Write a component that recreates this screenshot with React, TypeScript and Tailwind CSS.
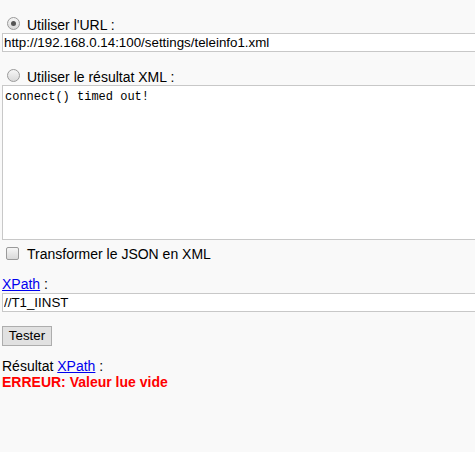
import React from 'react'

const Radio = ({ checked }: { checked?: boolean }) => (
  <span className="ml-[5px] mt-[3px] flex h-[13px] w-[13px] shrink-0 items-center justify-center rounded-full border border-[#9a9a9a] bg-gradient-to-b from-[#f6f6f6] to-[#d9d9d9]">
    {checked && <span className="h-[5px] w-[5px] rounded-full bg-[#555]" />}
  </span>
)

const Checkbox = () => (
  <span className="ml-[4px] mt-[1px] block h-[13px] w-[13px] shrink-0 rounded-[2px] border border-[#9a9a9a] bg-gradient-to-b from-[#f6f6f6] to-[#d9d9d9]" />
)

const inputCls =
  "block h-[19px] w-[520px] border border-[#c8c8c8] bg-white px-[1px] py-0 text-[13.33px] text-black outline-none font-['Liberation_Sans',Arial,sans-serif]"

export default function App() {
  return (
    <div className="min-h-[452px] overflow-hidden bg-[#f9f9f9] px-[2px] pt-[14px] font-['Liberation_Sans',Arial,sans-serif] text-[14px] leading-[16px] text-black">
      {/* source: URL */}
      <div className="flex h-[19px]">
        <Radio checked />
        <span className="ml-[7px] mt-[3px]">Utiliser l'URL :</span>
      </div>
      <input readOnly value="http://192.168.0.14:100/settings/teleinfo1.xml" className={inputCls} />

      {/* source: XML */}
      <div className="mt-[14px] flex h-[19px]">
        <Radio />
        <span className="ml-[7px] mt-[3px]">Utiliser le résultat XML :</span>
      </div>
      <textarea
        readOnly
        value="connect() timed out!"
        className="block h-[155px] w-[520px] resize-none border border-[#c8c8c8] bg-white px-[2px] pb-[2px] pt-[4px] font-['Liberation_Mono',monospace] text-[12px] leading-[14px] text-black outline-none"
      />

      <div className="mt-[6px] flex h-[16px]">
        <Checkbox />
        <span className="ml-[8px]">Transformer le JSON en XML</span>
      </div>

      <div className="mt-[14px] h-[17px]">
        <a href="#" className="text-[#0000ee] underline">XPath</a> :
      </div>
      <input readOnly value="//T1_IINST" className={inputCls} />

      <button className="mt-[14px] block h-[20px] w-[50px] border border-[#adadad] bg-[#e1e1e1] p-0 text-[13.33px] text-black">
        Tester
      </button>

      <div className="mt-[12px]">
        Résultat <a href="#" className="text-[#0000ee] underline">XPath</a> :
      </div>
      <div className="font-bold text-[#ff0000]">ERREUR: Valeur lue vide</div>
    </div>
  )
}
